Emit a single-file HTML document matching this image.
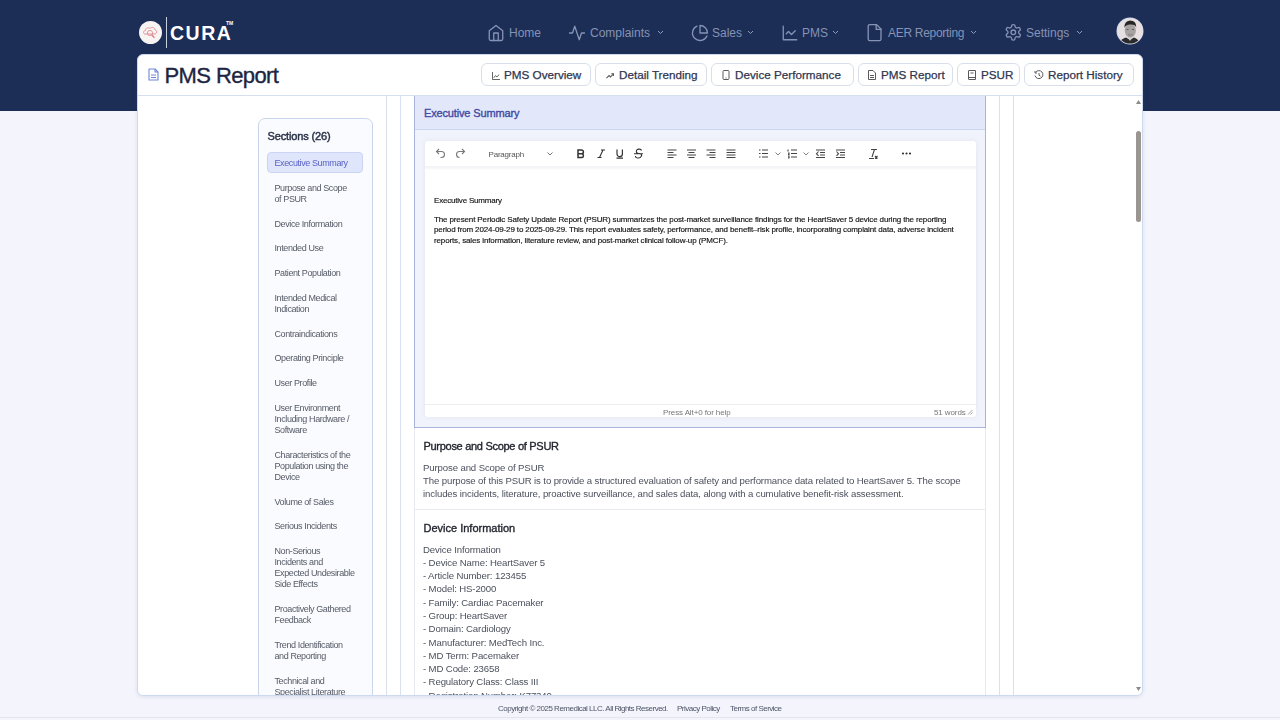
<!DOCTYPE html>
<html><head><meta charset="utf-8">
<style>
*{box-sizing:border-box;margin:0;padding:0}
html,body{width:1280px;height:720px;overflow:hidden;background:#f4f5fc;-webkit-font-smoothing:antialiased;font-family:"Liberation Sans",sans-serif;position:relative}
.a{position:absolute}
#top{left:0;top:0;width:1280px;height:111px;background:#1c2d56}
.nav{position:absolute;top:24px;height:16px;color:#8593b5;font-size:12px;line-height:16px;white-space:nowrap}
.nav span{top:1px !important}
.nav svg{position:absolute;top:0;left:0}
.nav span{position:absolute;top:0}
#card{left:137px;top:54px;width:1006px;height:642px;background:#fff;border-radius:6px;border:1px solid #cdd9ee;box-shadow:0 1px 4px rgba(60,90,160,.14)}
.tab{position:absolute;top:63px;height:23px;border:1px solid #d8deea;border-radius:6px;background:#fff;color:#2f3650;font-size:11.7px;line-height:22px;white-space:nowrap;-webkit-text-stroke:0.25px #2f3650}
.tab span{position:absolute;top:0}
.tab svg{position:absolute;top:5.5px}
#body{left:138px;top:96px;width:1004px;height:599px;overflow:hidden;border-radius:0 0 5px 5px}
#side{left:120px;top:22px;width:115px;height:700px;border:1px solid #c9d5ea;border-radius:7px;background:#fafbfe}
.it{position:absolute;left:136.5px;width:96px;font-size:9px;line-height:11px;color:#555a66;letter-spacing:-0.4px}
.vl{position:absolute;top:-1px;width:1px;height:620px;background:#d9e1f0}
.sh{font-size:11px;font-weight:normal;color:#23262f;-webkit-text-stroke:0.35px #23262f}
.bt{font-size:9.6px;line-height:13.3px;color:#4b505c;letter-spacing:-0.12px}
.tb{position:absolute;top:0}
</style></head><body><div id="root" style="position:absolute;left:0;top:0;width:1280px;height:720px;filter:grayscale(0.01)">
<div class="a" id="top"></div>
<!-- logo -->
<div class="a" style="left:139px;top:21px;width:23px;height:23px;border-radius:50%;background:#f8f4f4"></div>
<svg class="a" style="left:139px;top:21px" width="23" height="23" viewBox="0 0 23 23" fill="none" stroke="#e07f86" stroke-width="0.8">
 <path d="M6 13 C4 13 4 9.5 6.5 9.5 C6.5 7 9.5 6 11 7.5 C12.5 5.5 16 6.5 16 9 C18 9 18.5 12.5 16 13 Z"/>
 <circle cx="11" cy="12" r="2.6"/><path d="M12.8 14 L15.5 16.8" stroke-width="1.4"/>
</svg>
<div class="a" style="left:166px;top:17px;width:1px;height:31px;background:#c8d0e0"></div>
<div class="a" style="left:170px;top:22px;font-weight:bold;font-size:19.5px;color:#fff;letter-spacing:1.5px;line-height:22px">CURA</div>
<div class="a" style="left:226px;top:21px;font-size:5px;color:#fff;font-weight:bold;line-height:5px">TM</div>

<!-- nav -->
<div class="nav" style="left:488px">
 <svg style="left:-0.9px;top:-0.5px" width="18" height="18" viewBox="0 0 24 24" fill="none" stroke="#8593b5" stroke-width="1.75" stroke-linecap="round" stroke-linejoin="round"><path d="m3 9 9-7 9 7v11a2 2 0 0 1-2 2H5a2 2 0 0 1-2-2z"/><path d="M9 22V12h6v10"/></svg>
 <span style="left:21px">Home</span>
</div>
<div class="nav" style="left:569px">
 <svg style="left:-1.5px;top:-0.5px" width="18" height="18" viewBox="0 0 24 24" fill="none" stroke="#8593b5" stroke-width="1.75" stroke-linecap="round" stroke-linejoin="round"><path d="M22 12h-4l-3 9L9 3l-3 9H2"/></svg>
 <span style="left:21px">Complaints</span>
 <svg style="left:88px;top:6px" width="7" height="5" viewBox="0 0 7 5" fill="none" stroke="#8e9dbf" stroke-width="1"><path d="M1 1 L3.5 3.5 L6 1"/></svg>
</div>
<div class="nav" style="left:691px">
 <svg style="left:-0.5px;top:-0.5px" width="18" height="18" viewBox="0 0 24 24" fill="none" stroke="#8593b5" stroke-width="1.75" stroke-linecap="round" stroke-linejoin="round"><path d="M21.21 15.89A10 10 0 1 1 8 2.83"/><path d="M22 12A10 10 0 0 0 12 2v10z"/></svg>
 <span style="left:21px">Sales</span>
 <svg style="left:56px;top:6px" width="7" height="5" viewBox="0 0 7 5" fill="none" stroke="#8e9dbf" stroke-width="1"><path d="M1 1 L3.5 3.5 L6 1"/></svg>
</div>
<div class="nav" style="left:782px">
 <svg style="left:-1.5px;top:-0.2px" width="18" height="18" viewBox="0 0 24 24" fill="none" stroke="#8593b5" stroke-width="1.75" stroke-linecap="round" stroke-linejoin="round"><path d="M3 3v18h18"/><path d="m19 9-5 5-4-4-3 3"/></svg>
 <span style="left:20px">PMS</span>
 <svg style="left:50px;top:6px" width="7" height="5" viewBox="0 0 7 5" fill="none" stroke="#8e9dbf" stroke-width="1"><path d="M1 1 L3.5 3.5 L6 1"/></svg>
</div>
<div class="nav" style="left:868px">
 <svg style="left:-2.6px;top:-0.6px" width="19.2" height="19.2" viewBox="0 0 24 24" fill="none" stroke="#8593b5" stroke-width="1.65" stroke-linecap="round" stroke-linejoin="round"><path d="M14.5 2H6a2 2 0 0 0-2 2v16a2 2 0 0 0 2 2h12a2 2 0 0 0 2-2V7.5L14.5 2z"/><path d="M14 2v6h6"/></svg>
 <span style="left:20px;letter-spacing:-0.3px">AER Reporting</span>
 <svg style="left:102px;top:6px" width="7" height="5" viewBox="0 0 7 5" fill="none" stroke="#8e9dbf" stroke-width="1"><path d="M1 1 L3.5 3.5 L6 1"/></svg>
</div>
<div class="nav" style="left:1004px">
 <svg style="left:-0.3px;top:-0.6px" width="18.6" height="18.6" viewBox="0 0 24 24" fill="none" stroke="#8593b5" stroke-width="1.7" stroke-linecap="round" stroke-linejoin="round"><path d="M12.22 2h-.44a2 2 0 0 0-2 2v.18a2 2 0 0 1-1 1.73l-.43.25a2 2 0 0 1-2 0l-.15-.08a2 2 0 0 0-2.73.73l-.22.38a2 2 0 0 0 .73 2.73l.15.1a2 2 0 0 1 1 1.72v.51a2 2 0 0 1-1 1.74l-.15.09a2 2 0 0 0-.73 2.73l.22.38a2 2 0 0 0 2.73.73l.15-.08a2 2 0 0 1 2 0l.43.25a2 2 0 0 1 1 1.73V20a2 2 0 0 0 2 2h.44a2 2 0 0 0 2-2v-.18a2 2 0 0 1 1-1.73l.43-.25a2 2 0 0 1 2 0l.15.08a2 2 0 0 0 2.73-.73l.22-.39a2 2 0 0 0-.73-2.73l-.15-.08a2 2 0 0 1-1-1.74v-.5a2 2 0 0 1 1-1.74l.15-.09a2 2 0 0 0 .73-2.73l-.22-.38a2 2 0 0 0-2.73-.73l-.15.08a2 2 0 0 1-2 0l-.43-.25a2 2 0 0 1-1-1.73V4a2 2 0 0 0-2-2z"/><circle cx="12" cy="12" r="3"/></svg>
 <span style="left:22px">Settings</span>
 <svg style="left:72px;top:6px" width="7" height="5" viewBox="0 0 7 5" fill="none" stroke="#8e9dbf" stroke-width="1"><path d="M1 1 L3.5 3.5 L6 1"/></svg>
</div>
<!-- avatar -->
<svg class="a" style="left:1116px;top:17px" width="28" height="28" viewBox="0 0 28 28">
 <defs><clipPath id="avc"><circle cx="14" cy="14" r="12.6"/></clipPath></defs>
 <circle cx="14" cy="14" r="13.5" fill="#d3daea"/>
 <g clip-path="url(#avc)">
  <rect x="0" y="0" width="28" height="28" fill="#e4e0e2"/>
  <rect x="17" y="0" width="11" height="28" fill="#e9dfe1"/>
  <path d="M3 28 Q4 22 10 20.5 L14 23 L18 20.5 Q23 22 24 28 Z" fill="#2a2a2c"/>
  <path d="M11.5 20 L14 24 L16.5 20 Z" fill="#d2d0d0"/>
  <ellipse cx="14.3" cy="13.6" rx="5.6" ry="7" fill="#a6a2a2"/>
  <path d="M8.4 11 Q8 4.5 14 3.6 Q20.5 3.8 20.3 10.5 Q19 7.2 14.5 7.5 Q10 7.2 8.4 11 Z" fill="#262626"/>
  <path d="M10.5 12.5 H12.5 M16 12.5 H18" stroke="#555" stroke-width="0.9"/>
  <path d="M12 17.5 Q14.2 18.8 16.5 17.5" stroke="#6f6b6b" stroke-width="0.7" fill="none"/>
 </g>
</svg>
<!-- card -->
<div class="a" id="card"></div>
<svg class="a" style="left:148px;top:68px" width="11" height="13" viewBox="0 0 11 13" fill="none" stroke="#6f86d6" stroke-width="1.1" stroke-linejoin="round"><path d="M1 1 H7 L10 4 V12 H1 Z"/><path d="M7 1 V4 H10"/><path d="M3 7 H8 M3 9.5 H8"/></svg>
<div class="a" style="left:164.5px;top:62.7px;font-size:22px;color:#1c2541;line-height:26px;letter-spacing:-0.6px;-webkit-text-stroke:0.35px #1c2541">PMS Report</div>
<div class="a" style="left:138px;top:95px;width:1004px;height:1px;background:#d6dfee"></div>

<!-- tabs -->
<div class="tab" style="left:481px;width:110px">
 <svg style="left:9.5px;top:7.5px" width="8" height="8" viewBox="0 0 9 9" fill="none" stroke="#5a5a5a" stroke-width="1.1"><path d="M0.5 0 V8.5 H9"/><path d="M2 6.5 L4 4 L5.5 5.5 L8 3"/></svg>
 <span style="left:22px">PMS Overview</span></div>
<div class="tab" style="left:595px;width:112px">
 <svg style="left:9.5px;top:7.5px" width="8" height="8" viewBox="0 0 9 9" fill="none" stroke="#5a5a5a" stroke-width="1.2"><path d="M0.5 7 L3.5 4 L5 5.5 L8.5 2"/><path d="M6 2 H8.5 V4.5"/></svg>
 <span style="left:23px">Detail Trending</span></div>
<div class="tab" style="left:711px;width:143px">
 <svg style="left:10px" width="8" height="10" viewBox="0 0 8 10" fill="none" stroke="#5a5a5a" stroke-width="1"><rect x="1" y="0.5" width="6" height="9" rx="1"/><path d="M3.5 8 H4.5"/></svg>
 <span style="left:23px">Device Performance</span></div>
<div class="tab" style="left:858px;width:95px">
 <svg style="left:9px" width="8" height="10" viewBox="0 0 8 10" fill="none" stroke="#5a5a5a" stroke-width="1"><path d="M0.5 0.5 H5 L7.5 3 V9.5 H0.5 Z"/><path d="M2 5.5 H6 M2 7.5 H6"/></svg>
 <span style="left:22px">PMS Report</span></div>
<div class="tab" style="left:957px;width:63px">
 <svg style="left:10px" width="8" height="10" viewBox="0 0 8 10" fill="none" stroke="#5a5a5a" stroke-width="1"><path d="M0.5 1 Q0.5 0.5 1 0.5 H7.5 V9.5 H1 Q0.5 9.5 0.5 9 Z"/><path d="M0.5 7.5 H7.5 M2.5 3 H5.5"/></svg>
 <span style="left:23px">PSUR</span></div>
<div class="tab" style="left:1024px;width:110px">
 <svg style="left:9px" width="10" height="10" viewBox="0 0 10 10" fill="none" stroke="#5a5a5a" stroke-width="1"><path d="M1.5 2.5 A4 4 0 1 1 1 5.5"/><path d="M1 1 V3 H3"/><path d="M5 3 V5.2 L6.5 6.2"/></svg>
 <span style="left:23px">Report History</span></div>

<!-- body -->
<div class="a" id="body">
 <div class="a" id="side"></div>
 <div class="a" style="left:129.5px;top:33px;font-size:11px;font-weight:normal;color:#2b3248;line-height:14px;letter-spacing:-0.14px;-webkit-text-stroke:0.45px #2b3248">Sections (26)</div>
 <div class="a" style="left:129px;top:56px;width:96px;height:21px;background:#dfe5fa;border:1px solid #cbd4f2;border-radius:4px"></div>
 <div class="it" style="top:62.3px;color:#5963c7">Executive Summary</div>
 <div class="it" style="top:87.3px">Purpose and Scope<br>of PSUR</div>
 <div class="it" style="top:123.3px">Device Information</div>
 <div class="it" style="top:147.3px">Intended Use</div>
 <div class="it" style="top:172.3px">Patient Population</div>
 <div class="it" style="top:197.3px">Intended Medical<br>Indication</div>
 <div class="it" style="top:233.3px">Contraindications</div>
 <div class="it" style="top:257.3px">Operating Principle</div>
 <div class="it" style="top:282.3px">User Profile</div>
 <div class="it" style="top:307.3px">User Environment<br>Including Hardware /<br>Software</div>
 <div class="it" style="top:354.3px">Characteristics of the<br>Population using the<br>Device</div>
 <div class="it" style="top:401.3px">Volume of Sales</div>
 <div class="it" style="top:425.3px">Serious Incidents</div>
 <div class="it" style="top:450.3px">Non-Serious<br>Incidents and<br>Expected Undesirable<br>Side Effects</div>
 <div class="it" style="top:508.3px">Proactively Gathered<br>Feedback</div>
 <div class="it" style="top:544.3px">Trend Identification<br>and Reporting</div>
 <div class="it" style="top:580.3px">Technical and<br>Specialist Literature</div>

 <div class="vl" style="left:248px"></div>
 <div class="vl" style="left:262px"></div>
 <div class="vl" style="left:861px"></div>
 <div class="vl" style="left:875px"></div>

 <!-- active section -->
 <div class="a" style="left:276px;top:-1px;width:572px;height:333px;border:1px solid #a9b4da;border-top-color:#95a2d2;background:#f1f3fc"></div>
 <div class="a" style="left:277px;top:0px;width:570px;height:34px;background:#e2e8f9;border-bottom:1px solid #cdd6f0"></div>
 <div class="a" style="left:286px;top:10px;font-size:11px;font-weight:normal;color:#4149a6;line-height:14px;letter-spacing:-0.15px;-webkit-text-stroke:0.35px #4149a6">Executive Summary</div>
 <!-- editor -->
 <div class="a" style="left:286.5px;top:45px;width:551.5px;height:276px;background:#fff;border-radius:3px;box-shadow:0 0 5px rgba(60,60,90,.08)"></div>
 <div class="a" style="left:287px;top:69.5px;width:551px;height:4px;background:linear-gradient(#f3f3f6,#f6f6f8 50%,#fff)"></div>
 <div class="a" style="left:287px;top:308px;width:551px;height:1px;background:#eceef2"></div>
 <div id="tbar" class="a" style="left:287px;top:42.5px;width:551px;height:28px"><svg class="a" style="left:0;top:0" width="551" height="28" viewBox="0 0 551 28" fill="none" stroke="#444" stroke-width="1.1">
 <path d="M14 10 L11.5 12.5 L14 15" stroke="#7a7a7a"/><path d="M11.5 12.5 H16.5 A3 3 0 0 1 16.5 18.5 H15.5" stroke="#7a7a7a"/>
 <path d="M37 10 L39.5 12.5 L37 15" stroke="#7a7a7a"/><path d="M39.5 12.5 H34.5 A3 3 0 0 0 34.5 18.5" stroke="#7a7a7a"/>
 <path d="M122.5 13.5 L125 16 L127.5 13.5" stroke="#666" stroke-width="0.9"/>
 <path d="M153 11 H156.5 A1.9 1.9 0 0 1 156.5 14.8 H153 Z M153 14.8 H157 A1.9 1.9 0 0 1 157 18.5 H153 Z" stroke="#333" stroke-width="1.5"/>
 <path d="M176 11 H180 M172.5 18.5 H176.5 M178 11 L174.5 18.5" stroke="#333" stroke-width="1.1"/>
 <path d="M192 10.5 V15 A2.7 2.7 0 0 0 197.4 15 V10.5 M191.5 19.2 H198" stroke="#333" stroke-width="1.2"/>
 <path d="M209 14.7 H218 M216.5 11.5 A2.5 1.6 0 0 0 211.5 12 A2.5 1.8 0 0 0 214 14.5 A2.5 1.8 0 0 1 216 17.5 A2.5 1.6 0 0 1 210.5 17" stroke="#333" stroke-width="1.1"/>
 <g stroke="#444" stroke-width="1.1">
 <path d="M242.5 11 H251.5 M242.5 13.5 H248.5 M242.5 16 H251.5 M242.5 18.5 H248.5"/>
 <path d="M262 11 H271 M263.5 13.5 H269.5 M262 16 H271 M263.5 18.5 H269.5"/>
 <path d="M281.5 11 H290.5 M284.5 13.5 H290.5 M281.5 16 H290.5 M284.5 18.5 H290.5"/>
 <path d="M301.5 11 H310.5 M301.5 13.5 H310.5 M301.5 16 H310.5 M301.5 18.5 H310.5"/>
 <path d="M334 11 H335.5 M334 14.5 H335.5 M334 18 H335.5 M337 11 H343 M337 14.5 H343 M337 18 H343"/>
 <path d="M350.5 13.5 L353 16 L355.5 13.5" stroke="#777" stroke-width="0.9"/>
 <path d="M363 10.5 V12.5 M363 14 H364 V15.5 H363 M363 17 H364 V19 H363 M366 11 H372 M366 14.5 H372 M366 18 H372"/>
 <path d="M378.5 13.5 L381 16 L383.5 13.5" stroke="#777" stroke-width="0.9"/>
 <path d="M391 11 H400 M395 13.5 H400 M395 16 H400 M391 18.5 H400 M393.5 12.5 L391.5 14.7 L393.5 16.8"/>
 <path d="M411 11 H420 M415 13.5 H420 M415 16 H420 M411 18.5 H420 M411.5 12.5 L413.5 14.7 L411.5 16.8"/>
 <path d="M446 10.5 H452 M449.5 10.5 L447 18 M444 19.5 H449 M450 17 L452.5 19.5 M452.5 17 L450 19.5"/>
 </g>
 <circle cx="478" cy="14.5" r="1.1" fill="#333" stroke="none"/><circle cx="481.5" cy="14.5" r="1.1" fill="#333" stroke="none"/><circle cx="485" cy="14.5" r="1.1" fill="#333" stroke="none"/>
</svg>
<div class="a" style="left:63.5px;top:11px;font-size:8px;color:#555;line-height:10px;letter-spacing:-0.2px">Paragraph</div></div>
 <div class="a" style="left:296px;top:99.5px;font-size:8px;color:#111;line-height:10px;letter-spacing:-0.2px;-webkit-text-stroke:0.15px #111">Executive Summary</div>
 <div class="a" style="left:296px;top:118.5px;width:540px;font-size:8px;color:#111;line-height:10.8px;letter-spacing:-0.13px;-webkit-text-stroke:0.15px #111">The present Periodic Safety Update Report (PSUR) summarizes the post-market surveillance findings for the HeartSaver 5 device during the reporting<br>period from 2024-09-29 to 2025-09-29. This report evaluates safety, performance, and benefit–risk profile, incorporating complaint data, adverse incident<br>reports, sales information, literature review, and post-market clinical follow-up (PMCF).</div>
 <div class="a" style="left:525px;top:312px;font-size:8px;color:#777;line-height:10px;letter-spacing:-0.1px">Press Alt+0 for help</div>
 <div class="a" style="left:796px;top:312px;font-size:8px;color:#777;line-height:10px;letter-spacing:-0.1px">51 words</div>
 <svg class="a" style="left:829px;top:313px" width="6" height="6" viewBox="0 0 6 6" fill="none" stroke="#888" stroke-width="0.8"><path d="M5.5 1 L1 5.5 M5.5 3.5 L3.5 5.5"/></svg>

 <!-- section 2 -->
 <div class="a" style="left:276px;top:332px;width:572px;height:82px;background:#fff;border-left:1px solid #e6e9f0;border-right:1px solid #e6e9f0;border-bottom:1px solid #e9ecf1"></div>
 <div class="a sh" style="left:285.5px;top:344px;line-height:13px;letter-spacing:-0.29px">Purpose and Scope of PSUR</div>
 <div class="a bt" style="left:285px;top:364.8px;width:560px">Purpose and Scope of PSUR<br>The purpose of this PSUR is to provide a structured evaluation of safety and performance data related to HeartSaver 5. The scope<br>includes incidents, literature, proactive surveillance, and sales data, along with a cumulative benefit-risk assessment.</div>
 <!-- section 3 -->
 <div class="a" style="left:276px;top:414px;width:572px;height:300px;background:#fff;border-left:1px solid #e6e9f0;border-right:1px solid #e6e9f0"></div>
 <div class="a sh" style="left:285.5px;top:426px;line-height:13px;letter-spacing:0px">Device Information</div>
 <div class="a bt" style="left:285px;top:446.5px;width:560px">Device Information<br>- Device Name: HeartSaver 5<br>- Article Number: 123455<br>- Model: HS-2000<br>- Family: Cardiac Pacemaker<br>- Group: HeartSaver<br>- Domain: Cardiology<br>- Manufacturer: MedTech Inc.<br>- MD Term: Pacemaker<br>- MD Code: 23658<br>- Regulatory Class: Class III<br>- Registration Number: K77340</div>

 <!-- scrollbar -->
 <svg class="a" style="left:998px;top:4px" width="5" height="4" viewBox="0 0 5 4"><path d="M0 4 L2.5 0 L5 4 Z" fill="#8a8a8a"/></svg>
 <div class="a" style="left:998px;top:35px;width:5px;height:91px;border-radius:3px;background:#9b9592"></div>
 <svg class="a" style="left:998px;top:591px" width="5" height="4" viewBox="0 0 5 4"><path d="M0 0 L2.5 4 L5 0 Z" fill="#8a8a8a"/></svg>
</div>

<!-- footer -->
<div class="a" style="left:498px;top:704px;font-size:8px;color:#4d5366;line-height:10px;letter-spacing:-0.5px;white-space:nowrap">Copyright © 2025 Remedical LLC. All Rights Reserved.</div>
<div class="a" style="left:677px;top:704px;font-size:8px;color:#4d5366;line-height:10px;letter-spacing:-0.5px;white-space:nowrap">Privacy Policy</div>
<div class="a" style="left:730px;top:704px;font-size:8px;color:#4d5366;line-height:10px;letter-spacing:-0.5px;white-space:nowrap">Terms of Service</div>
<div class="a" style="left:0;top:717px;width:1280px;height:1px;background:#e3e5ea"></div>
</div></body></html>
